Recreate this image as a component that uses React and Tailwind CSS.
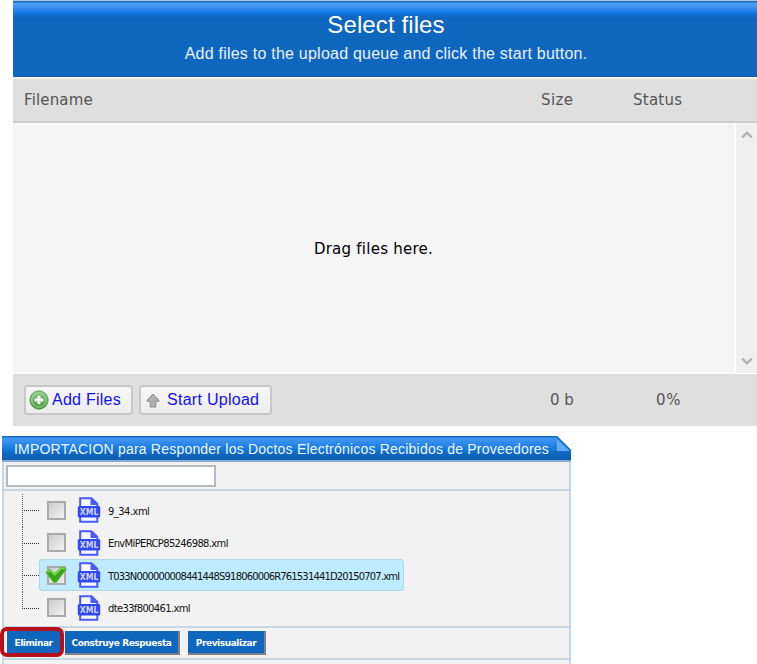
import { useState } from 'react';

const initialFiles = [
  { name: '9_34.xml', checked: false, spacing: 'tracking-[-0.55px]' },
  { name: 'EnvMiPERCP85246988.xml', checked: false, spacing: 'tracking-[-0.66px]' },
  { name: 'T033N000000008441448S918060006R761531441D20150707.xml', checked: true, spacing: 'tracking-[-0.85px]' },
  { name: 'dte33f800461.xml', checked: false, spacing: 'tracking-[-0.66px]' },
];

function AddIcon() {
  return (
    <svg width="20" height="20" viewBox="0 0 20 20" className="-ml-px">
      <defs>
        <linearGradient id="addGreen" x1="0" y1="0" x2="0" y2="1">
          <stop offset="0" stopColor="#8fc983" />
          <stop offset="1" stopColor="#459a3c" />
        </linearGradient>
      </defs>
      <circle cx="10" cy="10" r="9.2" fill="url(#addGreen)" stroke="#559a4d" strokeWidth="0.8" />
      <circle cx="10" cy="10" r="7.2" fill="none" stroke="#b3dcab" strokeWidth="0.8" />
      <path d="M10 5.7v8.6M5.7 10h8.6" stroke="#fff" strokeWidth="2.8" />
    </svg>
  );
}

function UploadIcon() {
  return (
    <svg width="14" height="15" viewBox="0 0 14 15" className="-ml-px">
      <path d="M7 1 13 7.3v1H9.8V14H4.2V8.3H1v-1z" fill="#b0b0b0" stroke="#8b8b8b" strokeWidth="1" />
    </svg>
  );
}

function XmlIcon() {
  return (
    <svg width="24" height="26" viewBox="0 0 24 26">
      <path d="M3.2 1.2H14.5L20.3 7V24.8H3.2z" fill="#f8f8ff" stroke="#4a58ff" strokeWidth="2" />
      <path d="M13.5 1v7h7z" fill="#4a58ff" />
      <rect x="0.8" y="9" width="22.4" height="11.4" rx="1.5" fill="#3047f4" />
      <text x="2.8" y="17.9" textLength="18.6" lengthAdjust="spacingAndGlyphs" fontFamily="DejaVu Sans" fontWeight="bold" fontSize="8.8" fill="#d3d6ff">XML</text>
    </svg>
  );
}

function Chevron({ down }) {
  return (
    <svg width="12" height="10" viewBox="0 0 12 10" className={down ? 'rotate-180' : ''}>
      <path d="M1.3 7.3 6 2.6l4.7 4.7" fill="none" stroke="#b6b6b6" strokeWidth="2.4" />
    </svg>
  );
}

function TreeRow({ file, last, onToggle }) {
  return (
    <li className="flex h-[32.5px]">
      <div className="w-[17px]">
        <div className={`w-px bg-[repeating-linear-gradient(180deg,#555_0px,#555_1px,transparent_1px,transparent_2px)] ${last ? 'h-[17px]' : 'h-[32.5px]'}`}>
          <div className="h-[17px] w-[17px] border-b border-dotted border-[#333]" />
        </div>
      </div>
      <div
        onClick={onToggle}
        className={`flex h-8 items-center border pl-[7px] pr-[4px] ${file.checked ? 'rounded-[3px] border-[#add8e6] bg-[#beebff]' : 'border-transparent'}`}
      >
        <div className="relative size-[19px] border-2 border-[#aaa] bg-linear-to-br from-[#cdcdcd] to-[#f1f1f1]">
          {file.checked && (
            <svg width="22" height="18" viewBox="0 0 22 18" className="absolute -left-[4px] -top-[2px] max-w-none">
              <path d="M.8 6.2 5 3.2 9.6 7.4 17 .8 21.4 3 11.2 16.4H8.6Z" fill="#35a719" stroke="#58b538" strokeWidth="0.7" />
              <path d="M2.4 6.4 5 4.4 9.6 8.8 17.1 2 19.6 3.3" fill="none" stroke="#78d650" strokeWidth="1.6" />
            </svg>
          )}
        </div>
        <div className="ml-[11px] mr-[7px]"><XmlIcon /></div>
        <span className={`whitespace-nowrap pt-[2px] font-['DejaVu_Sans',sans-serif] text-[10px] text-[#111] ${file.spacing}`}>{file.name}</span>
      </div>
    </li>
  );
}

function App() {
  const [files, setFiles] = useState(initialFiles);
  const [search, setSearch] = useState('');

  const toggleFile = (index) => {
    setFiles(files.map((f, i) => (i === index ? { ...f, checked: !f.checked } : f)));
  };

  const action = "h-6 whitespace-nowrap border-b-2 border-r-2 border-[#837f84] bg-[#0f66bf] pt-[3px] text-center font-['DejaVu_Sans',sans-serif] text-[9px] font-bold text-white";

  return (
    <div className="h-[664px] w-[757px] overflow-hidden bg-white font-['Liberation_Sans',Arial,sans-serif]">
      {/* Upload queue */}
      <div className="ml-[13px] h-[426px] font-['DejaVu_Sans',sans-serif] text-[15px] text-[#555]">
        <div className="h-[77px] border-b border-[#1b5da4] border-t border-t-[#a9c7de] bg-[linear-gradient(180deg,#1769ba_0px,#1769ba_1px,#4d9cf4_2px,#398ff1_7px,#147ce8_11px,#0f66bf_16px)] text-center font-['Liberation_Sans',Arial,sans-serif]">
          <h1 className="pt-[7px] pl-[2px] text-[24px] leading-[34px] tracking-[0.1px] text-white">Select files</h1>
          <p className="pl-[2px] text-[16px] leading-[23px] tracking-[0.23px] text-[#e8f3ff]">Add files to the upload queue and click the start button.</p>
        </div>
        <div className="flex h-[46px] items-center border-b-2 border-t-2 border-b-[#cdcdcd] border-t-[#f4f4f4] bg-[#dfdfdf] pl-[11px] tracking-[0.15px]">
          <span className="grow">Filename</span>
          <span className="w-[92px] tracking-[0.4px]">Size</span>
          <span className="w-[124px] tracking-[0.25px]">Status</span>
        </div>
        <div className="flex h-[251px] border-b border-white bg-[#f5f5f5]">
          <div className="flex w-[721px] items-center justify-center pt-[2px] tracking-[0.25px] text-black">Drag files here.</div>
          <div className="flex grow flex-col items-center justify-between border-l-2 border-white bg-[#f0f0f0] py-[7px]">
            <Chevron />
            <Chevron down />
          </div>
        </div>
        <div className="flex h-[52px] items-center bg-[#dfdfdf] pl-[11px]">
          <button className="flex h-[30px] w-[109px] items-center gap-[3px] rounded-[4px] border-2 border-[#c8c8c8] bg-linear-to-b from-[#f7f7f7] to-[#ededed] pl-[4px] font-['Liberation_Sans',Arial,sans-serif] text-[16px] tracking-[0.25px] text-[#1010ff]">
            <AddIcon />Add Files
          </button>
          <button className="ml-[6px] flex h-[30px] w-[133px] items-center gap-[7px] rounded-[4px] border-2 border-[#c8c8c8] bg-linear-to-b from-[#f7f7f7] to-[#ededed] pl-[6px] font-['Liberation_Sans',Arial,sans-serif] text-[16px] tracking-[0.28px] text-[#1010ff]">
            <UploadIcon />Start Upload
          </button>
          <span className="grow" />
          <span className="w-[106px]">0 b</span>
          <span className="w-[101px] tracking-[0.8px]">0%</span>
        </div>
      </div>

      {/* Received documents */}
      <div className="ml-[2px] mt-[10px] h-[228px] w-[569px]">
        <div className="relative flex h-[26px] items-center border-b-2 border-[#87acd0] bg-[linear-gradient(180deg,#1769ba_0px,#1769ba_1px,#4298f5_2px,#2d87e9_8px,#147bdc_13px,#0f66bf_18px,#0b5caf_24px)] pl-3">
          <h2 className="whitespace-nowrap pt-[2px] text-[14px] leading-5 tracking-[0.21px] text-[#edf6ff]">IMPORTACION para Responder los Doctos Electrónicos Recibidos de Proveedores</h2>
          <svg className="absolute right-0 top-0" width="18" height="20" viewBox="0 0 18 20">
            <path d="M4 0H18V14z" fill="#fff" />
            <path d="M4 0 18 14v4H1.5z" fill="#1468bd" />
            <path d="M3.5 2V15H17z" fill="#62a9f4" />
          </svg>
        </div>
        <div className="h-[202px] border-x-2 border-[#c6d6e3] bg-[#f2f2f2]">
          <div className="h-[29px] border-b-2 border-[#c6d6e3] pl-[2px] pt-[3px]">
            <input
              type="text"
              value={search}
              onChange={(e) => setSearch(e.target.value)}
              className="block h-[22px] w-[210px] border-2 border-[#b5b8be] bg-white px-1 text-[14px] outline-none"
            />
          </div>
          <ul className="h-[137px] border-b-2 border-[#c6d6e3] pl-[18px] pt-[3px]">
            {files.map((file, i) => (
              <TreeRow key={file.name} file={file} last={i === files.length - 1} onToggle={() => toggleFile(i)} />
            ))}
          </ul>
          <div className="flex h-8 items-center border-b-2 border-[#c6d6e3] pl-[3px]">
            <div className="relative">
              <button className={`${action} block w-[55px] tracking-[-0.45px]`}>Eliminar</button>
              <div className="absolute -left-[7px] -top-[4px] h-[30px] w-[64px] rounded-[7px] border-4 border-[#b90f1b]" />
            </div>
            <button className={`${action} ml-[3px] w-[115px] tracking-[-0.42px]`}>Construye Respuesta</button>
            <button className={`${action} ml-[8px] w-[78px] tracking-[-0.42px]`}>Previsualizar</button>
          </div>
        </div>
      </div>
    </div>
  );
}

export default App;
